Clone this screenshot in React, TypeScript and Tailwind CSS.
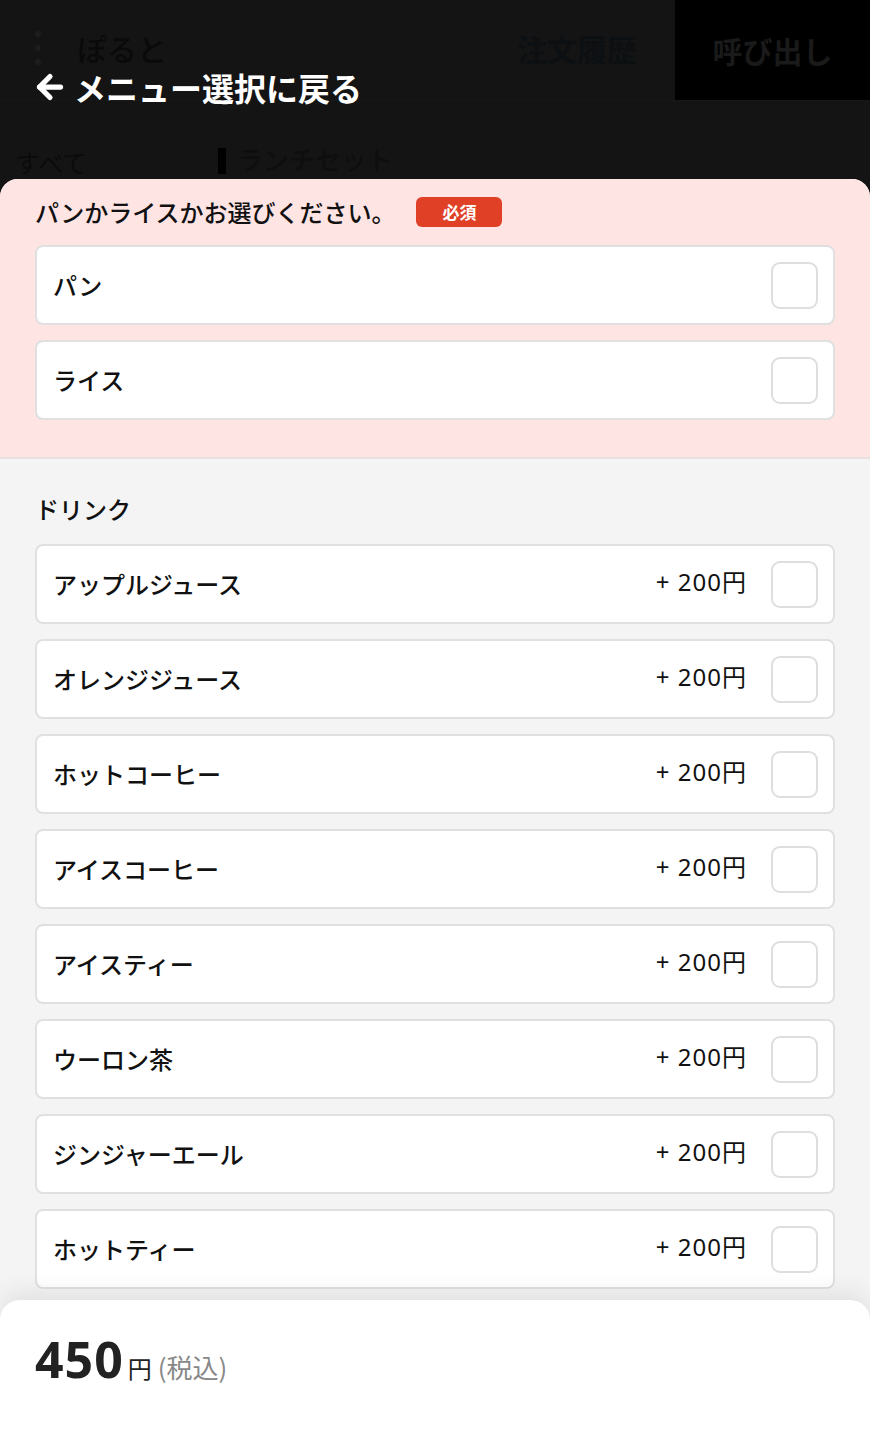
import { ArrowLeft } from 'lucide-react';

const font = { fontFamily: '"Noto Sans CJK JP", "Noto Sans", sans-serif' };
const latin = { fontFamily: '"Noto Sans", "Noto Sans CJK JP", sans-serif' };

const drinks = [
  'アップルジュース',
  'オレンジジュース',
  'ホットコーヒー',
  'アイスコーヒー',
  'アイスティー',
  'ウーロン茶',
  'ジンジャーエール',
  'ホットティー',
];

function Checkbox() {
  return <div className="w-[47px] h-[47px] rounded-[9px] border-2 border-[#dedede] bg-white shrink-0" />;
}

function OptionRow({ label, price }: { label: string; price?: string }) {
  return (
    <div className="h-[80px] rounded-[8px] border-2 border-[#e0e0e0] bg-white flex items-center pl-[16px] pr-[15px]">
      <span className="flex-1 text-[24px] font-medium text-[#111]">{label}</span>
      {price && (
        <span className="flex items-baseline text-[#111] mr-[25px] -mt-[6px]">
          <span className="text-[24px] tracking-[1px]" style={latin}>
            {price}
          </span>
          <span className="text-[24px]">円</span>
        </span>
      )}
      <Checkbox />
    </div>
  );
}

export default function App() {
  return (
    <div className="relative h-[1448px] w-full overflow-hidden bg-[#141414] flex flex-col" style={font}>
      {/* dimmed page header behind the sheet */}
      <div className="h-[101px] shrink-0 flex border-b border-[#171717]">
        <div className="flex items-center pl-[35px] gap-[36px] flex-1">
          <div className="flex flex-col gap-[8px] -mt-[4px]">
            <span className="w-[6px] h-[6px] rounded-full bg-[#1d1d1d]" />
            <span className="w-[6px] h-[6px] rounded-full bg-[#1d1d1d]" />
            <span className="w-[6px] h-[6px] rounded-full bg-[#1d1d1d]" />
          </div>
          <span className="text-[30px] font-medium text-[#0a0a0a] -mt-[4px]">ぽると</span>
        </div>
        <div className="w-[196px] flex items-center justify-center text-[30px] font-bold text-[#0c1013] -mt-[4px]">
          注文履歴
        </div>
        <div className="w-[195px] bg-black flex items-center justify-center text-[30px] font-bold text-[#1a1a1a]">
          呼び出し
        </div>
      </div>

      <div className="h-[78px] shrink-0 flex items-end pl-[15px] overflow-hidden">
        <span className="text-[25px] text-[#0b0b0b] w-[203px] -mb-[2px]">すべて</span>
        <span className="w-[8px] h-[26px] bg-black mr-[11px] mb-[5px]" />
        <span className="text-[26px] font-medium text-[#0e0e0e] mb-[1px]">ランチセット</span>
      </div>

      {/* back link overlay */}
      <div className="absolute left-[32px] top-[69px] flex items-center gap-[6px] text-white">
        <ArrowLeft size={36} strokeWidth={3.5} />
        <span className="text-[32px] font-bold leading-none">メニュー選択に戻る</span>
      </div>

      {/* option sheet */}
      <div className="flex-1 rounded-t-[18px] overflow-hidden bg-[#f4f4f4]">
        <div className="bg-[#ffe4e4] border-b-2 border-[#e6e0e0] pt-[16px] pb-[37px] px-[35px]">
          <div className="flex items-center gap-[21px] h-[34px]">
            <span className="text-[24px] font-medium text-[#111]">パンかライスかお選びください。</span>
            <span className="w-[86px] h-[30px] rounded-[6px] bg-[#df4026] text-white text-[17px] font-bold flex items-center justify-center">
              必須
            </span>
          </div>
          <div className="mt-[16px] flex flex-col gap-[15px]">
            <OptionRow label="パン" />
            <OptionRow label="ライス" />
          </div>
        </div>

        <div className="px-[35px] pt-[32px]">
          <div className="text-[24px] font-medium text-[#111] h-[36px] flex items-center">ドリンク</div>
          <div className="mt-[17px] flex flex-col gap-[15px]">
            {drinks.map((d) => (
              <OptionRow key={d} label={d} price="+ 200" />
            ))}
          </div>
        </div>
      </div>

      {/* total bar */}
      <div className="absolute left-0 right-0 bottom-0 h-[148px] bg-white rounded-t-[20px] shadow-[0_-8px_24px_rgba(0,0,0,0.08)] px-[35px] pt-[34px]">
        <div className="flex items-baseline">
          <span className="text-[50px] font-bold text-[#222] leading-none tracking-[1px]" style={latin}>
            450
          </span>
          <span className="text-[24px] text-[#222] ml-[4px]">円</span>
          <span className="text-[26px] text-[#888] ml-[6px]">(税込)</span>
        </div>
      </div>
    </div>
  );
}
